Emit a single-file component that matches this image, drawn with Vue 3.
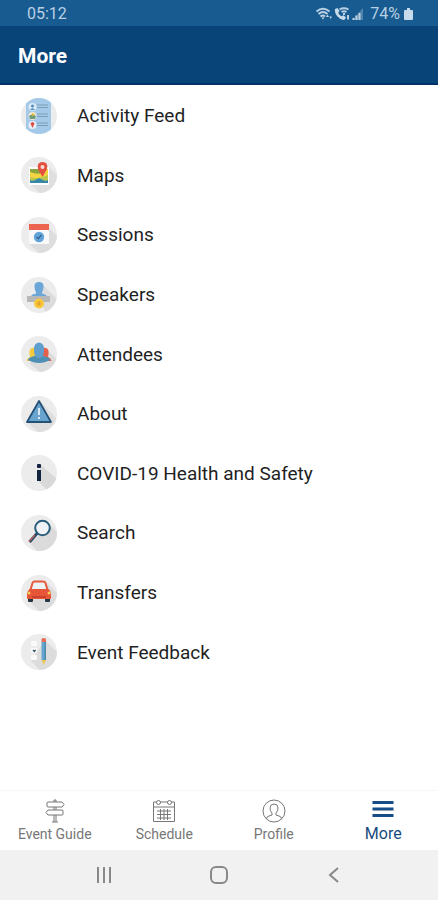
<template>
  <div class="app">
    <div class="status-bar">
      <span class="time">05:12</span>
      <div class="status-right">
        <svg class="wifi" viewBox="0 0 18 14">
          <path d="M1.500 4.500Q8 -1 14.500 4.500M3.500 7Q8 3 12.500 7M5.500 9.500Q8 7.500 10 9.500" />
          <path class="solid" d="M6.500 10.500L8 12.500L9.500 10.500ZM11 10L12.500 7.500L14 10ZM14.500 9.500H17L15.700 12Z" />
        </svg>
        <svg class="call" viewBox="0 0 16 14">
          <path class="solid" d="M1 2L3.500 1L5.500 4L4.200 5.800Q5 8 7.500 9.300L9.500 8.300L12 10.500L10.500 12.800Q7 13.500 3.500 9.500Q0.500 6 1 2Z" />
          <path d="M5.500 2.500Q10 0 14.500 2.500M7.500 5Q10 3.500 12.500 5M10 6V8M14 8V12.500" />
        </svg>
        <svg class="signal" viewBox="0 0 12 14">
          <path class="dim" d="M0 13L11 1V13Z" />
          <path class="bars" d="M1.500 11V13M4.500 8.500V13M7.500 6V13" />
        </svg>
        <span class="percent">74%</span>
        <svg class="battery" viewBox="0 0 9 14">
          <path class="solid" d="M3 1H6V3H8Q9 3 9 4V12Q9 13 8 13H1Q0 13 0 12V4Q0 3 1 3H3Z" />
        </svg>
      </div>
    </div>

    <header class="header">
      <h1>More</h1>
    </header>

    <main class="menu">
      <a v-for="item in items" :key="item.icon" href="#" class="menu-item">
        <svg class="menu-icon" viewBox="0 0 36 36" aria-hidden="true">
          <rect width="36" height="36" fill="#ececec" />

          <g v-if="item.icon === 'feed'">
            <rect x="5" y="0" width="25" height="36" rx="4" fill="#a5cae9" />
            <circle cx="11.500" cy="9" r="4" fill="#dceaf5" />
            <circle cx="11.500" cy="8" r="1.500" fill="#4e8dc2" />
            <path d="M9 12Q11.500 8.500 14 12Z" fill="#4e8dc2" />
            <circle cx="11.500" cy="18" r="4" fill="#f2ead0" />
            <path d="M8 18Q11 15 15 18L14 21H9Z" fill="#6f9d7f" />
            <circle cx="12" cy="16.500" r="1.300" fill="#e9b93d" />
            <circle cx="11.500" cy="27" r="4" fill="#e8eef3" />
            <path d="M9.500 25.500Q11.500 22.500 13.500 25.500L11.500 30Z" fill="#dc4b44" />
            <path d="M16 7H27M16 9.500H27M16 16H27M16 18.500H27M16 25H27M16 27.500H27" stroke="#7b9fba" stroke-width="1.200" />
          </g>

          <g v-else-if="item.icon === 'maps'">
            <path d="M28 10L36 18V36H19L9 27Z" fill="#dfdfdf" />
            <rect x="8" y="10" width="20" height="18" fill="#fff" />
            <rect x="9" y="12" width="18" height="14" fill="#f5d343" />
            <path d="M9 12H18L21 16Q16 18 9 15Z" fill="#8ba63f" />
            <path d="M9 20Q18 23 27 18V23H9Z" fill="#b9c74b" />
            <path d="M9 23Q12 24 14 23L18 21L22 23Q25 24 27 23V26H9Z" fill="#3688a8" />
            <path d="M21.500 20L17 12Q15.500 5 21.500 5Q27.500 5 26 12Z" fill="#e3503f" />
            <circle cx="21.500" cy="10" r="2" fill="#f9dcd5" />
          </g>

          <g v-else-if="item.icon === 'sessions'">
            <path d="M28 11L36 19V36H18L8 27H28Z" fill="#dddddd" />
            <rect x="8" y="11" width="20" height="16" fill="#f8f9fa" />
            <rect x="8" y="7" width="20" height="6" fill="#ec6350" />
            <circle cx="18" cy="20" r="5.200" fill="#62a3d9" />
            <path d="M15.500 20L17.300 21.500L20.500 18" fill="none" stroke="#33638f" stroke-width="1.300" />
          </g>

          <g v-else-if="item.icon === 'speakers'">
            <path d="M22 8L36 22V36H25L18 22Z" fill="#dcdcdc" />
            <path d="M18 5Q23 5 22.500 10Q22.500 13 21 15V16.500L25 18Q26 19 26 20H10Q10 18 11.500 17.500L15 16.500V15Q13.500 13 13.500 10Q13 5 18 5Z" fill="#6aa6d7" />
            <path d="M6 19H29V25H6Z" fill="#b5b7b8" />
            <circle cx="18" cy="26.500" r="5" fill="#f7c83d" />
            <circle cx="18" cy="26.500" r="2.500" fill="#efb530" />
            <path d="M18 24.500V28.500" stroke="#dc9a2c" stroke-width="1.200" />
          </g>

          <g v-else-if="item.icon === 'attendees'">
            <path d="M28 16L36 23V36H19L8 27Z" fill="#dcdcdc" />
            <path d="M11 12Q15 11 15 15V25H5.500Q6 22 9 21Q7 13 11 12Z" fill="#f4cb3f" />
            <path d="M25 12Q20 11 21 16V25H30.500Q30 22 27 21Q29 13 25 12Z" fill="#e85f4c" />
            <path d="M18 6.500Q23.500 7 23 14Q23 17 22 20Q28 21 29 24Q18 30 7 24Q8 21 14 20Q13 17 13 14Q12.500 7 18 6.500Z" fill="#619fce" />
            <path d="M14 20Q18 24 22 20Q28 21 29 24Q18 30 7 24Q8 21 14 20Z" fill="#4f8fb4" />
          </g>

          <g v-else-if="item.icon === 'about'">
            <path d="M19 5L36 23V36H17L7 27Z" fill="#dedede" />
            <path d="M18 5L30 26H6Z" fill="#69a4ce" stroke="#245276" stroke-width="1.800" stroke-linejoin="round" />
            <path d="M18 12V19M18 21V23" stroke="#d9e9f3" stroke-width="2" />
          </g>

          <g v-else-if="item.icon === 'info'">
            <path d="M20 10L36 24V36H27L16 25Z" fill="#d9d9d9" />
            <rect x="16" y="9" width="4" height="4" rx="1" fill="#10233f" />
            <rect x="16" y="15" width="4" height="11" fill="#10233f" />
          </g>

          <g v-else-if="item.icon === 'search'">
            <path d="M28 9L36 17V36H16L8 27L20 20Z" fill="#dbdbdb" />
            <circle cx="21.500" cy="13" r="7.300" fill="#eef2f4" stroke="#285c78" stroke-width="2" />
            <path d="M16 18.500L8.500 27" stroke="#254a68" stroke-width="3" />
            <path d="M14 20L8 26.500" stroke="#c5625e" stroke-width="1.200" />
          </g>

          <g v-else-if="item.icon === 'transfers'">
            <path d="M26 8L36 18V36H18L9 27Z" fill="#dcdcdc" />
            <rect x="7" y="21" width="5" height="6" rx="1" fill="#253744" />
            <rect x="24" y="21" width="5" height="6" rx="1" fill="#253744" />
            <path d="M9.500 15L11.500 8Q12 6.500 14 6.500H22Q24 6.500 24.500 8L26.500 15" fill="#edf2f4" stroke="#e65a3d" stroke-width="2" />
            <path d="M8.500 14H27.500Q30 16 30 19V23Q30 24 29 24H7Q6 24 6 23V19Q6 16 8.500 14Z" fill="#e65538" />
            <path d="M11 22H25" stroke="#bf3e2d" stroke-width="1.500" />
            <circle cx="8" cy="18" r="1.500" fill="#f6cc55" />
            <circle cx="28" cy="18" r="1.500" fill="#f6cc55" />
          </g>

          <g v-else>
            <path d="M24 6L36 18V36H19L10 27Z" fill="#dcdcdc" />
            <rect x="10" y="7" width="6" height="5" rx="1" fill="#fafafa" />
            <rect x="10" y="14" width="6" height="5" rx="1" fill="#fafafa" />
            <rect x="10" y="21" width="6" height="5" rx="1" fill="#fafafa" />
            <path d="M12 16L13.300 17.500L14.600 15.800" fill="none" stroke="#345269" stroke-width="1.200" />
            <path d="M20.500 8H25V26H20.500Z" fill="#65a5cf" />
            <path d="M23.500 8H25V26H23.500Z" fill="#4f8bae" />
            <path d="M20.500 5Q22.700 3 25 5V8H20.500Z" fill="#e66c55" />
            <path d="M20.500 26H25L22.700 31Z" fill="#ebc65b" />
          </g>
        </svg>
        <span class="menu-label">{{ item.label }}</span>
      </a>
    </main>

    <nav class="tabs">
      <a v-for="tab in tabs" :key="tab.icon" href="#" :class="['tab', { active: tab.icon === 'more' }]">
        <svg class="tab-icon" viewBox="0 0 24 24" aria-hidden="true">
          <g v-if="tab.icon === 'guide'">
            <path d="M5 3H19L21 5.500L19 8H5Q4 8 4 7V4Q4 3 5 3ZM5 11H19Q20 11 20 12V15Q20 16 19 16H5L3 13.500ZM11 3V1H13V3M11 8V11M13 8V11M11 16V23M13 16V23M9 23H15" />
          </g>
          <g v-else-if="tab.icon === 'schedule'">
            <path d="M5 3H1.500V22.500H22.500V3H19M8 3H16M1.500 8H22.500M5 12H19M5 15.500H19M5 19H19M8.500 10V21M12 10V21M15.500 10V21" />
            <circle cx="6.500" cy="3.500" r="2" />
            <circle cx="17.500" cy="3.500" r="2" />
          </g>
          <g v-else-if="tab.icon === 'profile'">
            <circle cx="12" cy="12" r="11" />
            <path d="M4.500 20Q4.500 17.500 7 17L10 16V14Q8 12 8 9Q8 5 12 5Q16 5 16 9Q16 12 14 14V16L17 17Q19.500 17.500 19.500 20" />
          </g>
          <path v-else class="bars" d="M1.500 3.500H22.500M1.500 10H22.500M1.500 16.500H22.500" />
        </svg>
        <span>{{ tab.label }}</span>
      </a>
    </nav>

    <div class="system-nav">
      <button aria-label="Recent apps">
        <svg viewBox="0 0 20 20"><path d="M4 2V18M10 2V18M16 2V18" /></svg>
      </button>
      <button aria-label="Home">
        <svg viewBox="0 0 20 20"><rect x="2" y="2" width="16" height="16" rx="5" /></svg>
      </button>
      <button aria-label="Back">
        <svg viewBox="0 0 20 20"><path d="M14 3L6 10L14 17" /></svg>
      </button>
    </div>
  </div>
</template>

<script setup>
const items = [
  { icon: 'feed', label: 'Activity Feed' },
  { icon: 'maps', label: 'Maps' },
  { icon: 'sessions', label: 'Sessions' },
  { icon: 'speakers', label: 'Speakers' },
  { icon: 'attendees', label: 'Attendees' },
  { icon: 'about', label: 'About' },
  { icon: 'info', label: 'COVID-19 Health and Safety' },
  { icon: 'search', label: 'Search' },
  { icon: 'transfers', label: 'Transfers' },
  { icon: 'feedback', label: 'Event Feedback' }
]

const tabs = [
  { icon: 'guide', label: 'Event Guide' },
  { icon: 'schedule', label: 'Schedule' },
  { icon: 'profile', label: 'Profile' },
  { icon: 'more', label: 'More' }
]
</script>

<style>
body {
  margin: 0;
  background: #ffffff;
}
</style>

<style scoped>
.app {
  display: flex;
  flex-direction: column;
  min-height: 100vh;
  font-family: Roboto, "Liberation Sans", sans-serif;
  color: #1f1f1f;
}

.status-bar {
  display: flex;
  justify-content: space-between;
  align-items: center;
  height: 26px;
  padding: 2px 25px 0 27px;
  box-sizing: border-box;
  background: #185b90;
  color: #b9d0e3;
  font-size: 16px;
  line-height: 24px;
}

.status-right {
  display: flex;
  align-items: center;
}

.status-right svg {
  height: 14px;
  fill: none;
  stroke: #b9d0e3;
  stroke-width: 2;
}

.status-right .solid {
  fill: #c7dbea;
  stroke: none;
}

.status-right .dim {
  fill: #4f83ae;
  stroke: none;
}

.wifi {
  width: 18px;
}

.call {
  width: 16px;
  margin-left: 1px;
}

.signal {
  width: 12px;
  margin-left: 2px;
}

.percent {
  margin: 0 4px 0 6px;
}

.battery {
  width: 9px;
}

.header {
  display: flex;
  align-items: center;
  height: 59px;
  padding: 2px 18px 0;
  box-sizing: border-box;
  background: #084478;
  border-bottom: 2px solid #04336b;
}

.header h1 {
  margin: 0;
  color: #ffffff;
  font-size: 21px;
  font-weight: 700;
}

.menu {
  display: flex;
  flex: 1;
  flex-direction: column;
  padding: 1px 0 108px;
}

.menu-item {
  display: flex;
  flex: 1;
  align-items: center;
  gap: 20px;
  padding: 0 21px;
  color: inherit;
  text-decoration: none;
}

.menu-icon {
  width: 36px;
  height: 36px;
  flex-shrink: 0;
  border-radius: 50%;
}

.menu-label {
  padding-top: 1px;
  font-size: 19px;
  line-height: 24px;
}

.tabs {
  display: grid;
  grid-template-columns: repeat(4, 1fr);
  height: 60px;
  box-sizing: border-box;
  border-top: 1px solid #f7f7f7;
}

.tab {
  display: flex;
  flex-direction: column;
  align-items: center;
  gap: 2px;
  padding-top: 8px;
  color: #777777;
  font-size: 14px;
  line-height: 18px;
  text-decoration: none;
}

.tab.active {
  color: #174c7d;
  font-size: 16px;
}

.tab-icon {
  width: 24px;
  height: 24px;
  fill: none;
  stroke: #777777;
  stroke-width: 1;
}

.tab-icon .bars {
  stroke: #174c86;
  stroke-width: 3;
}

.system-nav {
  display: flex;
  justify-content: space-between;
  align-items: center;
  height: 50px;
  padding: 0 84px;
  background: #f1f1f1;
}

.system-nav button {
  display: flex;
  justify-content: center;
  width: 40px;
  padding: 0;
  border: 0;
  background: transparent;
}

.system-nav svg {
  width: 20px;
  height: 20px;
  fill: none;
  stroke: #888888;
  stroke-width: 2;
}
</style>
